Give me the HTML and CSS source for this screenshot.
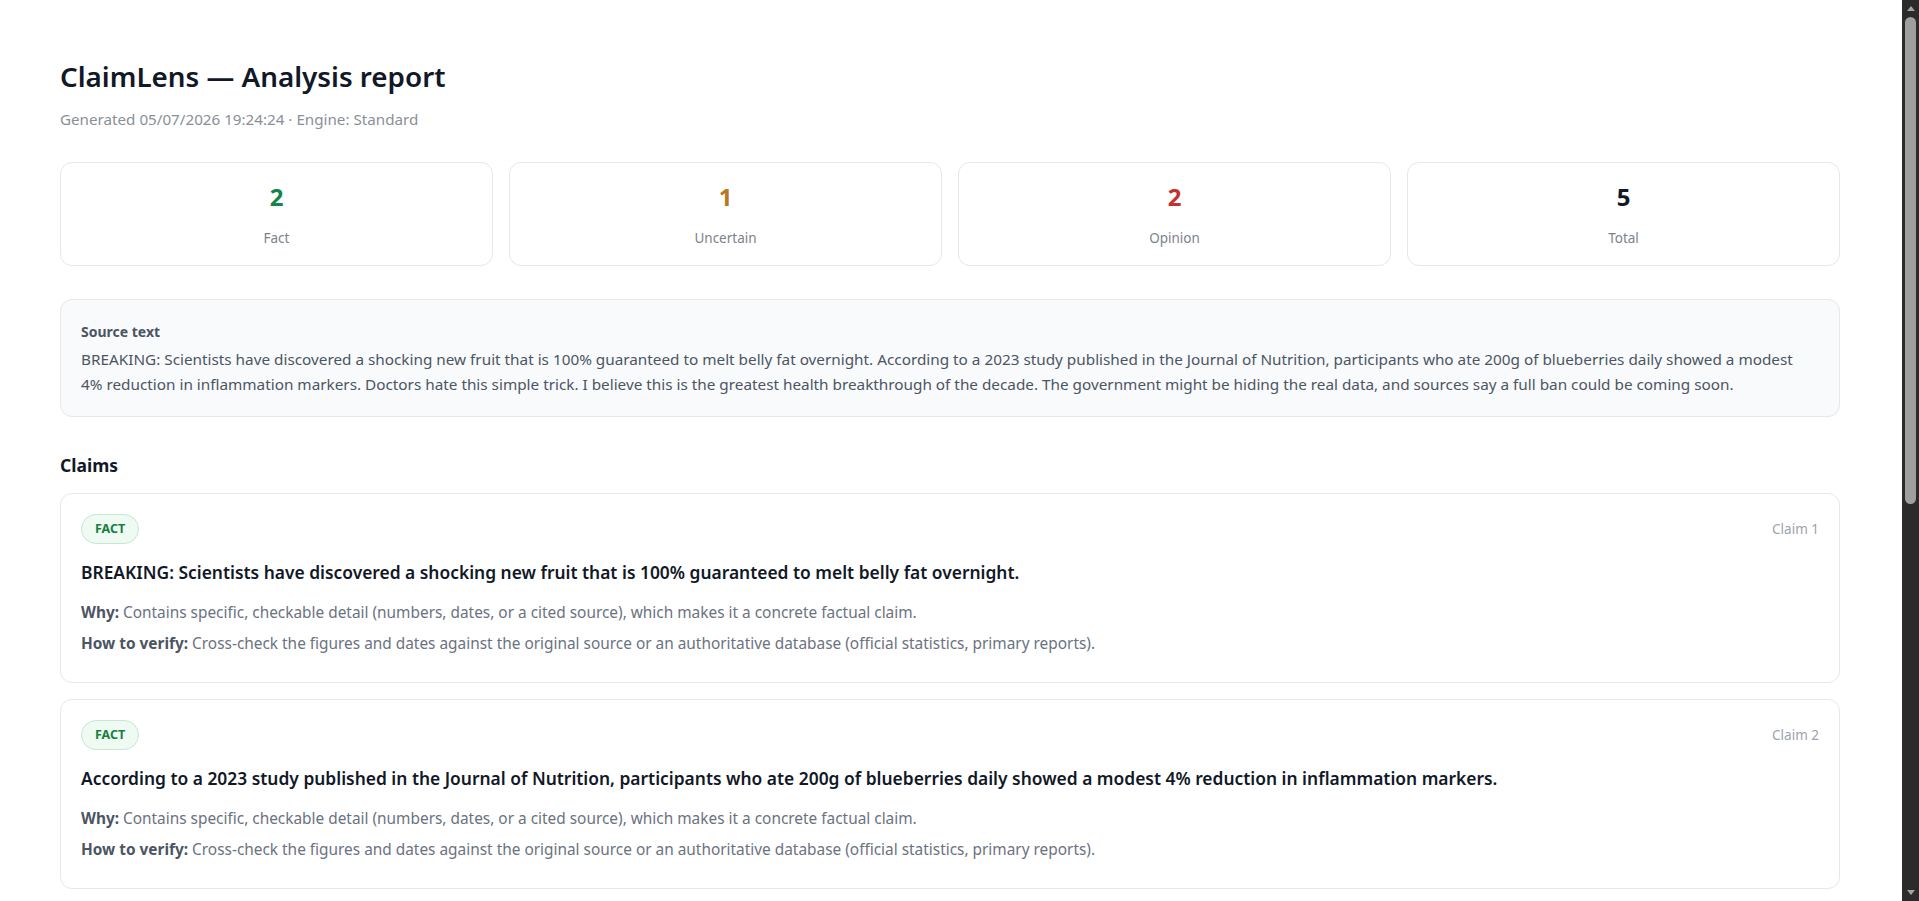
FILE: index.html
```html
<!DOCTYPE html>
<html lang="en">
<head>
  <meta charset="UTF-8">
  <meta name="viewport" content="width=device-width, initial-scale=1.0">
  <title>ClaimLens — Analysis report</title>
  <link rel="stylesheet" href="styles.css">
</head>
<body>
  <div class="window">
    <main class="report">
      <h1>ClaimLens — Analysis report</h1>
      <p class="meta">Generated 05/07/2026 19:24:24 · Engine: Standard</p>

      <section class="stats">
        <div class="stat">
          <div class="stat-value fact">2</div>
          <div class="stat-label">Fact</div>
        </div>
        <div class="stat">
          <div class="stat-value uncertain">1</div>
          <div class="stat-label">Uncertain</div>
        </div>
        <div class="stat">
          <div class="stat-value opinion">2</div>
          <div class="stat-label">Opinion</div>
        </div>
        <div class="stat">
          <div class="stat-value">5</div>
          <div class="stat-label">Total</div>
        </div>
      </section>

      <section class="source">
        <div class="source-label">Source text</div>
        <p class="source-text">BREAKING: Scientists have discovered a shocking new fruit that is 100% guaranteed to melt belly fat overnight. According to a 2023 study published in the Journal of Nutrition, participants who ate 200g of blueberries daily showed a modest 4% reduction in inflammation markers. Doctors hate this simple trick. I believe this is the greatest health breakthrough of the decade. The government might be hiding the real data, and sources say a full ban could be coming soon.</p>
      </section>

      <h2 class="section-title">Claims</h2>

      <section class="claims">
        <article class="claim">
          <div class="claim-head">
            <span class="badge badge-fact">FACT</span>
            <span class="claim-num">Claim 1</span>
          </div>
          <p class="claim-text">BREAKING: Scientists have discovered a shocking new fruit that is 100% guaranteed to melt belly fat overnight.</p>
          <p class="claim-note"><b>Why:</b> Contains specific, checkable detail (numbers, dates, or a cited source), which makes it a concrete factual claim.</p>
          <p class="claim-note"><b>How to verify:</b> Cross-check the figures and dates against the original source or an authoritative database (official statistics, primary reports).</p>
        </article>

        <article class="claim">
          <div class="claim-head">
            <span class="badge badge-fact">FACT</span>
            <span class="claim-num">Claim 2</span>
          </div>
          <p class="claim-text">According to a 2023 study published in the Journal of Nutrition, participants who ate 200g of blueberries daily showed a modest 4% reduction in inflammation markers.</p>
          <p class="claim-note"><b>Why:</b> Contains specific, checkable detail (numbers, dates, or a cited source), which makes it a concrete factual claim.</p>
          <p class="claim-note"><b>How to verify:</b> Cross-check the figures and dates against the original source or an authoritative database (official statistics, primary reports).</p>
        </article>
      </section>
    </main>

    <!-- dark classic scrollbar down the right edge -->
    <div class="scrollbar" aria-hidden="true">
      <span class="scroll-arrow up"></span>
      <span class="scroll-thumb"></span>
      <span class="scroll-track"></span>
      <span class="scroll-arrow down"></span>
    </div>
  </div>
</body>
</html>
```

FILE: styles.css
```css
body {
  margin: 0;
  font-family: "Noto Sans", "Open Sans", sans-serif;
  color: #111827;
  background-color: #fff;
}

.window {
  display: flex;
  height: 100vh;
  overflow: hidden;
}
.report {
  flex: 1;
  min-width: 0;
  padding: 59px 62px 0 60px;
  overflow: hidden;
}

.scrollbar {
  flex: none;
  width: 17px;
  display: flex;
  flex-direction: column;
  align-items: center;
  background-color: #2b2b2b;
}
.scroll-arrow {
  width: 100%;
  height: 17px;
  display: flex;
  align-items: center;
  justify-content: center;
}
.scroll-arrow::before {
  content: "";
  border-left: 4px solid transparent;
  border-right: 4px solid transparent;
}
.scroll-arrow.up::before {
  border-bottom: 5px solid #a3a3a3;
}
.scroll-arrow.down::before {
  border-top: 5px solid #a3a3a3;
}
.scroll-thumb {
  width: 11px;
  height: 487px;
  border-radius: 6px;
  background-color: #9f9f9f;
}
.scroll-track {
  flex: 1;
}

h1 {
  margin: 0;
  font-size: 27.8px;
  font-weight: 600;
  line-height: 34px;
}
.meta {
  margin: 16px 0 0;
  font-size: 15.2px;
  line-height: 21px;
  color: #8a8f98;
}

.stats {
  display: grid;
  grid-template-columns: repeat(4, 1fr);
  gap: 16px;
  margin-top: 32px;
}
.stat {
  padding: 18px 20px 17px;
  text-align: center;
  border: 1px solid #e5e7eb;
  border-radius: 12px;
}
.stat-value {
  font-size: 24px;
  font-weight: 700;
  line-height: 32px;
}
.stat-label {
  margin-top: 15px;
  font-size: 13.5px;
  line-height: 20px;
  color: #7c828c;
}
.fact { color: #16854a; }
.uncertain { color: #b7791f; }
.opinion { color: #c53030; }

.source {
  margin-top: 33px;
  padding: 21px 24px 20px 20px;
  background-color: #f9fafb;
  border: 1px solid #e5e7eb;
  border-radius: 12px;
}
.source-label {
  font-size: 14px;
  font-weight: 700;
  line-height: 21px;
  color: #4b5563;
}
.source-text {
  margin: 5px 0 0;
  font-size: 15.3px;
  line-height: 24.5px;
  color: #4b5563;
}

.section-title {
  margin: 36px 0 16px;
  font-size: 17.5px;
  font-weight: 700;
  line-height: 24px;
}

.claims {
  display: flex;
  flex-direction: column;
  gap: 16px;
}
.claim {
  padding: 20px;
  border: 1px solid #e5e7eb;
  border-radius: 12px;
}
.claim-head {
  display: flex;
  align-items: center;
  justify-content: space-between;
}
.claim-num {
  font-size: 13.5px;
  color: #9ca3af;
}
.badge {
  padding: 6px 13px;
  font-size: 12.5px;
  font-weight: 700;
  line-height: 16px;
  border: 1px solid;
  border-radius: 999px;
}
.badge-fact {
  color: #15803d;
  background-color: #effaf3;
  border-color: #c4e8d1;
}
.claim-text {
  margin: 15px 0;
  font-size: 17.4px;
  font-weight: 600;
  line-height: 26px;
}
.claim-note {
  margin: 0 0 6px;
  font-size: 15.4px;
  line-height: 25px;
  color: #6b7280;
}
.claim-note b {
  color: #4b5563;
}
```
